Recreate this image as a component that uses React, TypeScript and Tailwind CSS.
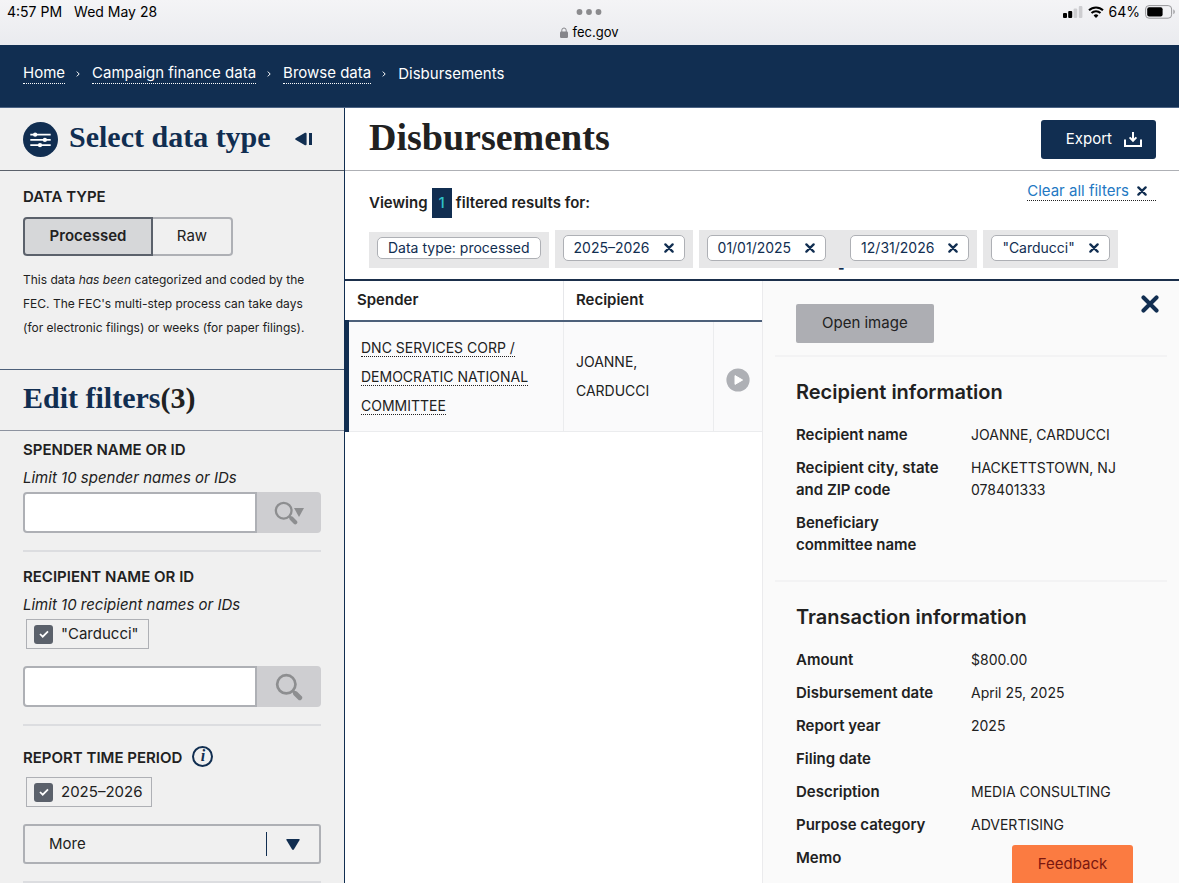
import React, { useState } from "react";

type Detail = { label: string; value?: string };

const recipientInfo: Detail[] = [
  { label: "Recipient name", value: "JOANNE, CARDUCCI" },
  { label: "Recipient city, state and ZIP code", value: "HACKETTSTOWN, NJ 078401333" },
  { label: "Beneficiary committee name" },
];

const transactionInfo: Detail[] = [
  { label: "Amount", value: "$800.00" },
  { label: "Disbursement date", value: "April 25, 2025" },
  { label: "Report year", value: "2025" },
  { label: "Filing date" },
  { label: "Description", value: "MEDIA CONSULTING" },
  { label: "Purpose category", value: "ADVERTISING" },
  { label: "Memo" },
];

const Cross = ({ className }: { className: string }) => (
  <svg viewBox="0 0 16 16" className={className} fill="none" stroke="currentColor" strokeWidth="3.6" strokeLinecap="round">
    <path d="M2.2 2.2 13.8 13.8M13.8 2.2 2.2 13.8" />
  </svg>
);

const Magnifier = ({ className }: { className: string }) => (
  <svg viewBox="0 0 26 26" className={className} fill="none" stroke="currentColor" strokeLinecap="round">
    <circle cx="10.5" cy="10.5" r="8.5" strokeWidth="2.5" />
    <path d="M17 17l1.5 1.5" strokeWidth="2.5" />
    <path d="M19 19l4 4" strokeWidth="4.5" />
  </svg>
);

const StatusBar = () => (
  <div className="h-[45px] shrink-0 bg-linear-to-b from-[#f4f4f6] to-[#eaebef] px-[7px] text-black grid grid-cols-3 items-start">
    <div className="flex gap-3 pt-0.5 text-[14px] leading-5">
      <span>4:57 PM</span>
      <span>Wed May 28</span>
    </div>
    <div className="flex flex-col items-center">
      <svg viewBox="0 0 26 6" className="mt-[9px] h-[6px] w-[26px]" fill="#8b8b8e">
        <circle cx="3.5" cy="3" r="2.9" />
        <circle cx="13" cy="3" r="2.9" />
        <circle cx="22.5" cy="3" r="2.9" />
      </svg>
      <div className="mt-[7px] flex items-center gap-1 text-[13px] leading-5">
        <svg viewBox="0 0 8 11" className="h-[11px] w-2">
          <rect y="4.6" width="8" height="6.4" rx="1.2" fill="#85858a" />
          <path d="M1.8 5V3.2a2.2 2.2 0 0 1 4.4 0V5" fill="none" stroke="#85858a" strokeWidth="1" />
        </svg>
        <span>fec.gov</span>
      </div>
    </div>
    <div className="flex items-center justify-end gap-[5px] pt-0.5 text-[14px] leading-5">
      <svg viewBox="0 0 20 12" className="h-3 w-5">
        <rect x="0" y="7" width="4" height="5" rx="1" />
        <rect x="5.2" y="5" width="4" height="7" rx="1" />
        <rect x="10.6" y="2.5" width="3.6" height="9.5" rx="1" fill="#cdcdd0" />
        <rect x="15.8" y="0" width="3.6" height="12" rx="1" fill="#cdcdd0" />
      </svg>
      <svg viewBox="0 0 16 12" className="h-3 w-4" fill="none" stroke="black" strokeWidth="2">
        <path d="M1 4.3a10 10 0 0 1 14 0M3.5 7a6.5 6.5 0 0 1 9 0" />
        <path d="M8 12 5.6 9.4a3.4 3.4 0 0 1 4.8 0z" fill="black" stroke="none" />
      </svg>
      <span>64%</span>
      <svg viewBox="0 0 31 14" className="-mr-1 h-[14px] w-[31px]">
        <rect x=".6" y=".6" width="26" height="12.6" rx="3.4" fill="none" stroke="#97979a" />
        <rect x="2.2" y="2.2" width="15.4" height="9.4" rx="2" />
        <path d="M28.4 4.6c1.8.6 1.8 4 0 4.6z" fill="#97979a" />
      </svg>
    </div>
  </div>
);

const Crumb = ({ children }: { children: string }) => (
  <li className="flex items-center">
    <a href="#" className="border-b border-dotted border-white leading-5">
      {children}
    </a>
    <svg viewBox="0 0 4 6" className="mr-3 ml-[11px] h-1.5 w-1" fill="none" stroke="white">
      <path d="M.8.6 3.2 3 .8 5.4" />
    </svg>
  </li>
);

const CheckedFilter = ({ id, label }: { id: string; label: string }) => (
  <div className="ml-[3px] flex h-[30px] w-fit items-center gap-2 border border-[#aeb0b5] pl-[7px] pr-[9px]">
    <span className="grid place-items-center">
      <input
        id={id}
        type="checkbox"
        defaultChecked
        className="col-start-1 row-start-1 size-[19px] appearance-none rounded-[3px] bg-[#5b616b]"
      />
      <svg viewBox="0 0 12 10" className="pointer-events-none col-start-1 row-start-1 h-2 w-2.5" fill="none" stroke="white" strokeWidth="2.2">
        <path d="M1 5l3.4 3.4L11 1.6" />
      </svg>
    </span>
    <label htmlFor={id} className="leading-5">{label}</label>
  </div>
);

const SearchBox = ({ id, hint, caret }: { id: string; hint: string; caret?: boolean }) => (
  <div className="flex h-[41px]">
    <input
      id={id}
      type="text"
      aria-describedby={hint}
      className="w-[234px] min-w-0 rounded-l border-2 border-[#aeb0b5] bg-white px-2"
    />
    <button aria-label="Search" className="flex flex-1 items-center justify-center rounded-r bg-[#ceced1] text-[#8d8e90]">
      <Magnifier className={caret ? "size-6" : "size-7"} />
      {caret && (
        <svg viewBox="0 0 10 9" className="-ml-1 h-[9px] w-2.5" fill="currentColor">
          <path d="M0 0h10L5 9z" />
        </svg>
      )}
    </button>
  </div>
);

const Sidebar = () => {
  const [dataType, setDataType] = useState("processed");
  const active = "border-[#5b616b] bg-[#d6d7d9] font-semibold";
  const idle = "border-[#aeb0b5]";
  return (
    <aside className="w-[345px] shrink-0 overflow-hidden border-r border-[#112e51] bg-[#f0f0f0]">
      <div className="flex h-[63px] items-center border-b border-[#5b616b] pl-[23px]">
        <svg viewBox="0 0 36 36" className="size-[35px]">
          <circle cx="18" cy="18" r="18" fill="#112e51" />
          <g stroke="white" strokeWidth="1.8">
            <path d="M7.5 13h21M7.5 18.4h21M7.5 23.8h21" />
          </g>
          <g fill="white">
            <circle cx="12.5" cy="13" r="2.2" />
            <circle cx="22.5" cy="18.4" r="2.2" />
            <circle cx="17.5" cy="23.8" r="2.2" />
          </g>
        </svg>
        <h2 className="ml-[11px] w-[226px] pb-1 font-['Liberation_Serif'] text-[30px] leading-9 font-bold text-[#112e51]">
          Select data type
        </h2>
        <button aria-label="Hide filters">
          <svg viewBox="0 0 18 14" className="h-[14px] w-[18px]" fill="#112e51">
            <path d="M.6 6.2 10 .8q1.6-.6 1.6 1v10.4q0 1.6-1.6 1L.6 7.8q-.8-.8 0-1.6zM14 1h3v12h-3z" />
          </svg>
        </button>
      </div>

      <div className="h-[199px] border-b border-[#4d607a] pt-4 pl-[23px]">
        <h3 className="leading-5 font-semibold">DATA TYPE</h3>
        <div className="mt-2.5 flex h-[39px]">
          <button
            onClick={() => setDataType("processed")}
            className={`w-[130px] rounded-l border-2 ${dataType === "processed" ? active : idle}`}
          >
            Processed
          </button>
          <button
            onClick={() => setDataType("raw")}
            className={`w-20 rounded-r border-2 border-l-0 ${dataType === "raw" ? active : idle}`}
          >
            Raw
          </button>
        </div>
        <p className="mt-3 text-[12px] leading-6">
          This data <em>has been</em> categorized and coded by the
          <br />
          FEC. The FEC's multi-step process can take days
          <br />
          (for electronic filings) or weeks (for paper filings).
        </p>
      </div>

      <div className="flex h-[61px] items-center border-b border-[#8d93a0] pl-[23px]">
        <h2 className="pb-1 font-['Liberation_Serif'] text-[30px] leading-9 font-bold text-[#112e51]">
          Edit filters<span className="text-[#212121]">(3)</span>
        </h2>
      </div>

      <div className="pr-[23px] pl-[23px]">
        <div className="border-b-2 border-[#dcdde0] pt-[9px] pb-[17px]">
          <label htmlFor="spender" className="block leading-5 font-semibold">SPENDER NAME OR ID</label>
          <p id="spender-hint" className="mt-2 pb-1 leading-5 italic">Limit 10 spender names or IDs</p>
          <SearchBox id="spender" hint="spender-hint" caret />
        </div>
        <div className="border-b-2 border-[#dcdde0] pt-[15px] pb-[17px]">
          <label htmlFor="recipient" className="block leading-5 font-semibold">RECIPIENT NAME OR ID</label>
          <p id="recipient-hint" className="mt-2 pb-1 leading-5 italic">Limit 10 recipient names or IDs</p>
          <CheckedFilter id="carducci" label={'"Carducci"'} />
          <div className="h-[17px]" />
          <SearchBox id="recipient" hint="recipient-hint" />
        </div>
        <div className="border-b-2 border-[#dcdde0] pt-[18px] pb-[17px]">
          <div className="flex items-center gap-2.5">
            <h3 className="pt-1 leading-5 font-semibold">REPORT TIME PERIOD</h3>
            <button
              aria-label="About report time period"
              className="size-[21px] rounded-full border-2 border-[#112e51] font-['Liberation_Serif'] text-[16px] leading-4 font-bold text-[#112e51] italic"
            >
              i
            </button>
          </div>
          <div className="mt-[9px]">
            <CheckedFilter id="cycle" label="2025–2026" />
          </div>
          <div className="mt-[17px] grid h-10 items-center">
            <select
              aria-label="More time periods"
              className="col-start-1 row-start-1 h-full w-full appearance-none rounded-[3px] border-2 border-[#aeb0b5] pl-6"
            >
              <option>More</option>
            </select>
            <div className="pointer-events-none col-start-1 row-start-1 mr-[21px] flex items-center justify-end gap-[19px]">
              <span className="h-6 w-px bg-[#112e51]" />
              <svg viewBox="0 0 14 11" className="h-[11px] w-[14px]" fill="#112e51">
                <path d="M1 0h12q1 0 .6 1L8 10.3q-1 1.2-2 0L.4 1Q0 0 1 0z" />
              </svg>
            </div>
          </div>
        </div>
      </div>
    </aside>
  );
};

const Pill = ({ children }: { children: string }) => (
  <button className="flex h-[26px] items-center gap-3.5 rounded-[5px] border border-[#aeb0b5] bg-white px-2.5 leading-5">
    {children}
    <Cross className="size-2.5" />
  </button>
);

const Results = () => (
  <table className="w-full border-collapse">
    <thead>
      <tr className="h-10 text-left">
        <th className="w-[217px] border-r border-b-2 border-r-[#e6e7ea] border-b-[#4d607a] pl-2.5 font-semibold">Spender</th>
        <th colSpan={2} className="border-b-2 border-[#4d607a] pl-3 font-semibold">Recipient</th>
      </tr>
    </thead>
    <tbody>
      <tr className="h-[110px] border-b border-[#ebecee] bg-[#fafafb] text-[14px] leading-[29px]">
        <td className="border-r border-l-4 border-r-[#ebecee] border-l-[#112e51] pl-3">
          <a href="#" className="border-b border-dotted border-[#212121]">
            DNC SERVICES CORP /<br />DEMOCRATIC NATIONAL<br />COMMITTEE
          </a>
        </td>
        <td className="w-[150px] border-r border-[#ebecee] pl-3">
          JOANNE,
          <br />
          CARDUCCI
        </td>
        <td className="w-[49px]">
          <button aria-label="Toggle details" className="mx-auto mt-2 block">
            <svg viewBox="0 0 24 24" className="size-6">
              <circle cx="12" cy="12" r="11.6" fill="#aeb0b5" />
              <path d="M9 7.6v8.8l7.6-4.4z" fill="white" stroke="white" strokeLinejoin="round" />
            </svg>
          </button>
        </td>
      </tr>
    </tbody>
  </table>
);

const DetailList = ({ title, items }: { title: string; items: Detail[] }) => (
  <section className="border-t-2 border-[#f3f3f4] px-[21px] pt-[21px] pb-6">
    <h3 className="text-[20px] leading-7 font-semibold">{title}</h3>
    <dl className="mt-[18px] space-y-[11px] leading-[22px]">
      {items.map((item) => (
        <div key={item.label} className="flex">
          <dt className="w-[175px] shrink-0 pr-6 font-semibold">{item.label}</dt>
          <dd className="text-[14px]">{item.value}</dd>
        </div>
      ))}
    </dl>
  </section>
);

const App = () => {
  return (
    <div className="flex h-screen flex-col overflow-hidden bg-white font-[Inter,sans-serif] text-[15px] text-[#212121]">
      <StatusBar />
      <nav className="h-[63px] shrink-0 border-b border-[#4c6485] bg-[#112e51] px-[23px] pt-[18px] text-white">
        <ol className="flex items-center">
          <Crumb>Home</Crumb>
          <Crumb>Campaign finance data</Crumb>
          <Crumb>Browse data</Crumb>
          <li className="leading-5">Disbursements</li>
        </ol>
      </nav>

      <div className="flex min-h-0 flex-1">
        <Sidebar />
        <main className="flex min-w-0 flex-1 flex-col">
          <div className="flex h-[63px] shrink-0 items-center justify-between border-b border-[#aeb0b5] pr-[23px] pl-6">
            <h1 className="pb-1 font-['Liberation_Serif'] text-[38px] leading-10 font-bold">Disbursements</h1>
            <button className="flex h-[39px] items-center gap-3 rounded-[3px] bg-[#112e51] pr-3.5 pl-[25px] text-white">
              Export
              <svg viewBox="0 0 18 15" className="h-[15px] w-[18px]" fill="none" stroke="white" strokeWidth="2">
                <path d="M1 7.5V14h16V7.5" />
                <path d="M9 0v8M5.6 5.4 9 8.8l3.4-3.4" />
              </svg>
            </button>
          </div>

          <div className="h-[110px] shrink-0 border-b-2 border-[#1b2f4b] pr-[23px] pl-6">
            <div className="flex items-start justify-between">
              <p className="mt-[17px] flex items-center gap-1 leading-[30px] font-semibold">
                Viewing <span className="bg-[#112e51] px-[7px] font-medium text-[#2fc0c8]">1</span> filtered results for:
              </p>
              <a href="#" className="mt-[11px] flex items-center gap-2 border-b border-dotted border-[#212121] pr-[9px] leading-[18px] text-[#2378c3]">
                Clear all filters
                <Cross className="size-2.5 text-[#112e51]" />
              </a>
            </div>
            <ul className="mt-3 flex items-end gap-1.5 text-[14px] text-[#112e51]">
              <li className="bg-[#e7e7e8] px-2 pt-[5px] pb-[9px]">
                <div className="rounded-[5px] border border-[#aeb0b5] bg-white px-2.5 leading-5">Data type: processed</div>
              </li>
              <li className="bg-[#e7e7e8] px-2 pt-[5px] pb-[7px]">
                <Pill>2025–2026</Pill>
              </li>
              <li className="relative flex gap-6 bg-[#e7e7e8] px-2 pt-[5px] pb-[7px]">
                <Pill>01/01/2025</Pill>
                <Pill>12/31/2026</Pill>
                <span className="absolute top-7 left-1/2 leading-5 font-bold">-</span>
              </li>
              <li className="bg-[#e7e7e8] px-2 pt-[5px] pb-[7px]">
                <Pill>"Carducci"</Pill>
              </li>
            </ul>
          </div>

          <div className="flex min-h-0 flex-1">
            <div className="flex-1">
              <Results />
            </div>
            <div className="relative w-1/2 shrink-0 overflow-hidden border-l border-[#ebebed] bg-[#fafafa] px-3">
              <button aria-label="Close details" className="absolute top-3.5 right-5 text-[#112e51]">
                <Cross className="size-[18px]" />
              </button>
              <div className="px-[21px] pt-[23px] pb-3">
                <button className="h-[39px] rounded-[2px] bg-[#adaeb3] px-[26px]">Open image</button>
              </div>
              <DetailList title="Recipient information" items={recipientInfo} />
              <DetailList title="Transaction information" items={transactionInfo} />
            </div>
          </div>
        </main>
      </div>

      <button className="fixed right-[46px] bottom-0 h-[38px] w-[121px] rounded-t-[3px] bg-[#fb7b41] text-[15px] text-[#7a1710]">
        Feedback
      </button>
    </div>
  );
};

export default App;
